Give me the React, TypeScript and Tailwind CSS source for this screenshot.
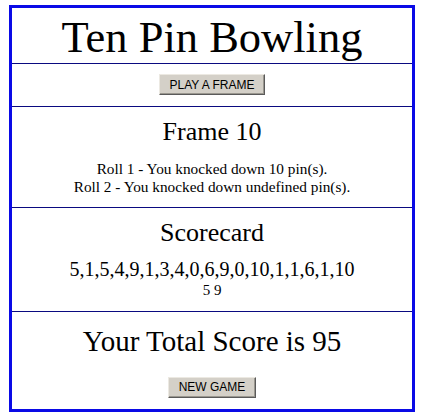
const serif = { fontFamily: '"Liberation Serif", "Times New Roman", serif' };

function ClassicButton({ label }: { label: string }) {
  return (
    <button
      type="button"
      className="h-[21px] px-[10px] bg-[#d4d0c8] text-black text-[12px] leading-none border-t border-l border-[#ece9e2] border-r border-b border-r-[#5a5a5a] border-b-[#5a5a5a] shadow-[inset_-1px_-1px_#9a978f]"
      style={{ fontFamily: '"Liberation Sans", Arial, sans-serif' }}
    >
      {label}
    </button>
  );
}

export default function App() {
  const scores = [5, 1, 5, 4, 9, 1, 3, 4, 0, 6, 9, 0, 10, 1, 1, 6, 1, 10];

  return (
    <div className="bg-white w-[422px] h-[419px] pt-[5px] pl-[9px]">
      <div
        className="w-[406px] h-[407px] border-[3px] border-[#0a0ae6] flex flex-col text-black text-center"
        style={serif}
      >
        <div className="pt-[5px] pb-[2px] border-b border-[#0a0a80]">
          <h1 className="text-[44.5px] leading-[48px]">Ten Pin Bowling</h1>
        </div>

        <div className="pt-[10px] pb-[11px] flex justify-center border-b border-[#0a0a80]">
          <ClassicButton label="PLAY A FRAME" />
        </div>

        <div className="pt-[10px] pb-[11px] border-b border-[#0a0a80]">
          <h2 className="text-[26px] leading-[30px]">Frame 10</h2>
          <div className="mt-[13px] text-[15.3px] leading-[18px]">
            <p>Roll 1 - You knocked down 10 pin(s).</p>
            <p>Roll 2 - You knocked down undefined pin(s).</p>
          </div>
        </div>

        <div className="pt-[10px] pb-[12px] border-b border-[#0a0a80]">
          <h2 className="text-[26px] leading-[30px]">Scorecard</h2>
          <p className="mt-[9px] text-[20px] leading-[24px]">{scores.join(",")}</p>
          <p className="text-[15px] leading-[18px]">5 9</p>
        </div>

        <div className="pt-[12px] flex flex-col items-center">
          <h2 className="text-[29px] leading-[34px]">Your Total Score is 95</h2>
          <div className="mt-[16px]">
            <ClassicButton label="NEW GAME" />
          </div>
        </div>
      </div>
    </div>
  );
}
